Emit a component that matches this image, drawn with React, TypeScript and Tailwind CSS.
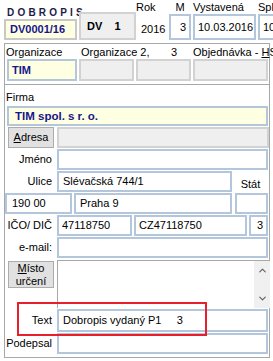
import React from "react";
import { ChevronUp, ChevronDown } from "lucide-react";

const field = "h-full border-2 border-[#b4c6dc] bg-white px-[3px] flex items-center whitespace-nowrap overflow-hidden";
const yellow = "h-full border-2 border-[#b4c6dc] bg-[#ffffe1] px-[3px] flex items-center whitespace-nowrap overflow-hidden font-bold text-[#16168c]";
const grey = "h-full border-2 border-[#d2d2d2] bg-[#efefef] px-[3px] flex items-center whitespace-nowrap overflow-hidden";
const button = "border border-[#adadad] bg-[#e1e1e1] flex flex-col items-center justify-center leading-[13px]";

const Row = ({ label, children }: { label?: string; children: React.ReactNode }) => (
  <div className="flex h-[21px] mt-[1px]">
    <div className="w-[52px] shrink-0 pr-[5px] flex items-center justify-end whitespace-nowrap">{label}</div>
    {children}
  </div>
);

export default function App() {
  return (
    <div className="w-[273px] h-[361px] overflow-hidden bg-white text-black text-[11px] leading-[13px] font-['Liberation_Sans',Arial,sans-serif]">
      {/* header */}
      <div className="flex h-[40px] pl-[4px]">
        <div className="w-[73px] shrink-0 flex flex-col">
          <div className="h-[19px] pt-[6px] pl-[3px] text-[10px] font-bold tracking-[3.2px] text-[#1c1c48] whitespace-nowrap">DOBROPIS</div>
          <div className={yellow + " !border-[#c8c8c8] pl-[4px]"}>DV0001/16</div>
        </div>
        <div className="w-[57px] shrink-0 ml-[2px] flex flex-col">
          <div className="h-[19px]" />
          <div className={grey + " font-bold pl-[6px]"}>DV&nbsp;&nbsp;&nbsp;&nbsp;1</div>
        </div>
        <div className="w-[33px] shrink-0 flex flex-col">
          <div className="h-[19px] pt-[1px]">Rok</div>
          <div className="h-[21px] flex items-center pl-[5px]">2016</div>
        </div>
        <div className="w-[22px] shrink-0 flex flex-col">
          <div className="h-[19px] pt-[1px] text-center">M</div>
          <div className={field + " justify-end"}>3</div>
        </div>
        <div className="w-[63px] shrink-0 ml-[2px] flex flex-col">
          <div className="h-[19px] pt-[1px] whitespace-nowrap">Vystavená</div>
          <div className={field}>10.03.2016</div>
        </div>
        <div className="w-[60px] shrink-0 ml-[2px] flex flex-col">
          <div className="h-[19px] pt-[1px] whitespace-nowrap">Splatnost</div>
          <div className={field}>10.03.2016</div>
        </div>
      </div>

      {/* Organizace group */}
      <div className="ml-[4px] mt-[3px] w-[266px] border-l border-t border-r border-[#a8a8a8] h-[41px]">
        <div className="flex h-[15px] pt-[2px] whitespace-nowrap">
          <div className="w-[76px] shrink-0 pl-[1px]">Organizace</div>
          <div className="w-[88px] shrink-0">Organizace 2,</div>
          <div className="w-[24px] shrink-0 pl-[2px]">3</div>
          <div>
            Objednávka - <span className="underline">H</span>S
          </div>
        </div>
        <div className="flex h-[22px] pl-[2px]">
          <div className="w-[70px] shrink-0">
            <div className={yellow}>TIM</div>
          </div>
          <div className="w-[55px] shrink-0 ml-[2px]">
            <div className={grey} />
          </div>
          <div className="w-[55px] shrink-0 ml-[2px]">
            <div className={grey} />
          </div>
          <div className="w-[75px] shrink-0 ml-[2px]">
            <div className={grey} />
          </div>
        </div>
      </div>

      {/* Firma group */}
      <div className="ml-[4px] w-[266px] border border-[#a8a8a8] h-[274px]">
        <div className="h-[21px] pt-[6px] pl-[1px]">Firma</div>
        <div className="h-[20px] pl-[2px] pr-[1px]">
          <div className={yellow + " pl-[6px] text-[11.5px]"}>TIM spol. s r. o.</div>
        </div>

        <div className="flex h-[21px] mt-[1px]">
          <div className="w-[52px] shrink-0 pl-[3px] pr-[3px]">
            <div className={button + " h-full"}>
              <span>
                <span className="underline">A</span>dresa
              </span>
            </div>
          </div>
          <div className="w-[212px] shrink-0">
            <div className={grey} />
          </div>
        </div>

        <Row label="Jméno">
          <div className="w-[211px] shrink-0">
            <div className={field} />
          </div>
        </Row>

        <div className="flex h-[21px] mt-[1px]">
          <div className="w-[52px] shrink-0 pr-[5px] flex items-center justify-end">Ulice</div>
          <div className="w-[175px] shrink-0">
            <div className={field + " pl-[4px]"}>Slévačská 744/1</div>
          </div>
          <div className="w-[37px] shrink-0 flex items-end justify-center pb-[1px]">Stát</div>
        </div>

        <div className="flex h-[21px] mt-[1px]">
          <div className="w-[67px] shrink-0">
            <div className={field + " pl-[5px]"}>190 00</div>
          </div>
          <div className="w-[158px] shrink-0 ml-[2px]">
            <div className={field + " pl-[4px]"}>Praha 9</div>
          </div>
          <div className="w-[33px] shrink-0 ml-[3px]">
            <div className={field} />
          </div>
        </div>

        <Row label="IČO/ DIČ">
          <div className="w-[75px] shrink-0">
            <div className={field}>47118750</div>
          </div>
          <div className="w-[113px] shrink-0 ml-[2px]">
            <div className={field}>CZ47118750</div>
          </div>
          <div className="w-[19px] shrink-0 ml-[2px]">
            <div className={field + " justify-end"}>3</div>
          </div>
        </Row>

        <Row label="e-mail:">
          <div className="w-[211px] shrink-0">
            <div className={field} />
          </div>
        </Row>

        <div className="flex h-[48px] mt-[2px]">
          <div className="w-[52px] shrink-0 pl-[3px] pr-[3px] pt-[1px]">
            <div className={button + " h-[27px]"}>
              <span>
                <span className="underline">M</span>ísto
              </span>
              <span>určení</span>
            </div>
          </div>
          <div className="w-[213px] shrink-0 border-l border-t border-[#a8a8a8] flex justify-end">
            <div className="w-[16px] bg-[#f0f0f0] flex flex-col items-center justify-between py-[4px] text-[#606060]">
              <ChevronUp size={11} strokeWidth={2.5} />
              <ChevronDown size={11} strokeWidth={2.5} />
            </div>
          </div>
        </div>

        <div className="relative flex h-[23px] mt-[1px]">
          <div className="absolute left-[12px] top-[-7px] w-[190px] h-[34px] border-2 border-[#e8202c]" />
          <div className="w-[52px] shrink-0 pr-[5px] flex items-center justify-end">Text</div>
          <div className="w-[211px] shrink-0">
            <div className={field + " pl-[4px]"}>Dobropis vydaný P1&nbsp;&nbsp;&nbsp;&nbsp;&nbsp;3</div>
          </div>
        </div>

        <div className="flex h-[21px] mt-[1px]">
          <div className="w-[52px] shrink-0 pr-[5px] flex items-center justify-end">Podepsal</div>
          <div className="w-[211px] shrink-0">
            <div className={field} />
          </div>
        </div>
      </div>
    </div>
  );
}
